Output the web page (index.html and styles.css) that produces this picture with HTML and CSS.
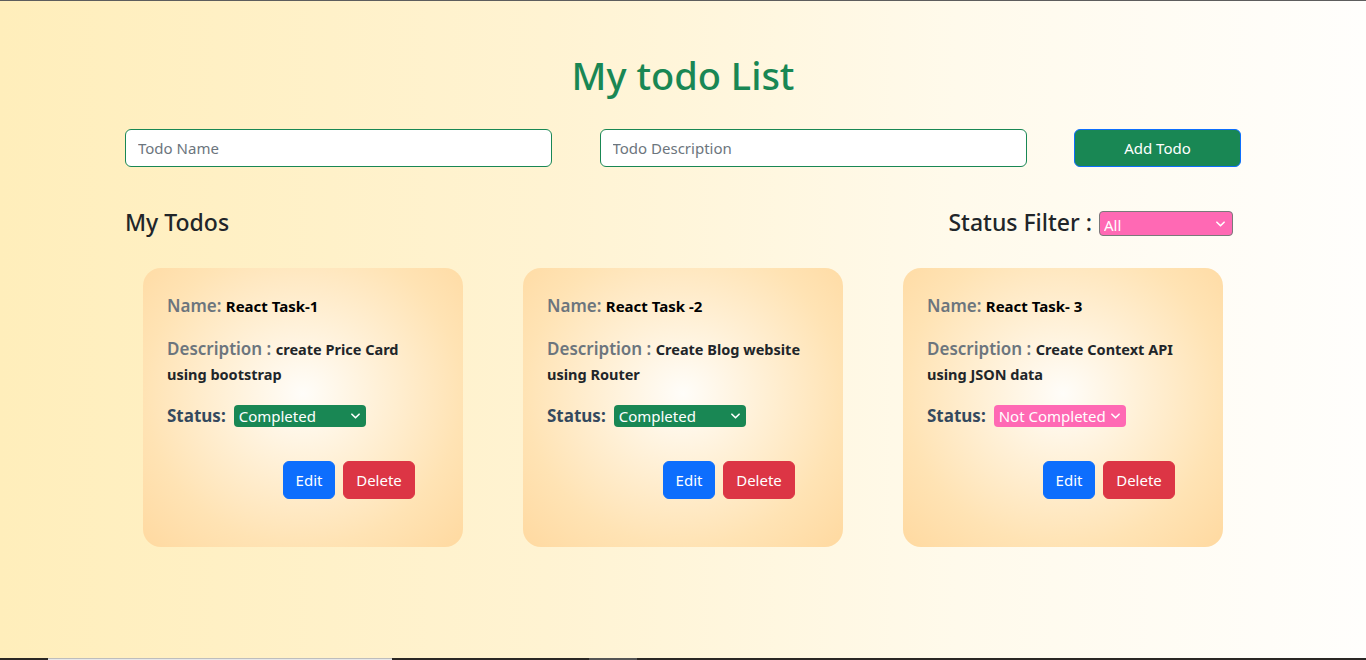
FILE: index.html
```html
<!DOCTYPE html>
<html lang="en">
<head>
<meta charset="utf-8">
<title>My todo List</title>
<link rel="stylesheet" href="styles.css">
</head>
<body>
<div class="page">
  <div class="container">
    <h1 class="title">My todo List</h1>
    <div class="form-row">
      <input class="field" type="text" placeholder="Todo Name">
      <input class="field" type="text" placeholder="Todo Description">
      <button class="btn btn-add">Add Todo</button>
    </div>
    <div class="list-head">
      <h2 class="list-title">My Todos</h2>
      <div class="filter">
        <span class="filter-label">Status Filter :</span>
        <div class="select-wrap select-filter">
          <select class="select"><option>All</option></select>
          <svg class="chev" viewBox="0 0 10 6" width="9" height="6"><path d="M1 1l4 4 4-4" fill="none" stroke="#fff" stroke-width="1.8" stroke-linecap="round" stroke-linejoin="round"/></svg>
        </div>
      </div>
    </div>
    <div class="cards">
      <div class="card">
        <p class="line-name"><span class="lbl">Name:</span> <span class="val-name">React Task-1</span></p>
        <p class="line-desc"><span class="lbl">Description :</span> <span class="val-desc">create Price Card using bootstrap</span></p>
        <div class="status-row">
          <span class="status-lbl">Status:</span>
          <div class="select-wrap select-status done">
            <select class="select"><option>Completed</option></select>
            <svg class="chev" viewBox="0 0 10 6" width="9" height="6"><path d="M1 1l4 4 4-4" fill="none" stroke="#fff" stroke-width="1.8" stroke-linecap="round" stroke-linejoin="round"/></svg>
          </div>
        </div>
        <div class="actions">
          <button class="btn btn-edit">Edit</button>
          <button class="btn btn-del">Delete</button>
        </div>
      </div>
      <div class="card">
        <p class="line-name"><span class="lbl">Name:</span> <span class="val-name">React Task -2</span></p>
        <p class="line-desc"><span class="lbl">Description :</span> <span class="val-desc">Create Blog website using Router</span></p>
        <div class="status-row">
          <span class="status-lbl">Status:</span>
          <div class="select-wrap select-status done">
            <select class="select"><option>Completed</option></select>
            <svg class="chev" viewBox="0 0 10 6" width="9" height="6"><path d="M1 1l4 4 4-4" fill="none" stroke="#fff" stroke-width="1.8" stroke-linecap="round" stroke-linejoin="round"/></svg>
          </div>
        </div>
        <div class="actions">
          <button class="btn btn-edit">Edit</button>
          <button class="btn btn-del">Delete</button>
        </div>
      </div>
      <div class="card">
        <p class="line-name"><span class="lbl">Name:</span> <span class="val-name">React Task- 3</span></p>
        <p class="line-desc"><span class="lbl">Description :</span> <span class="val-desc">Create Context API using JSON data</span></p>
        <div class="status-row">
          <span class="status-lbl">Status:</span>
          <div class="select-wrap select-status notdone">
            <select class="select"><option>Not Completed</option></select>
            <svg class="chev" viewBox="0 0 10 6" width="9" height="6"><path d="M1 1l4 4 4-4" fill="none" stroke="#fff" stroke-width="1.8" stroke-linecap="round" stroke-linejoin="round"/></svg>
          </div>
        </div>
        <div class="actions">
          <button class="btn btn-edit">Edit</button>
          <button class="btn btn-del">Delete</button>
        </div>
      </div>
    </div>
  </div>
  <div class="bottom-bar">
    <span class="seg-a"></span><span class="seg-light"></span><span class="seg-b"></span><span class="seg-gray"></span><span class="seg-c"></span>
  </div>
</div>
</body>
</html>
```

FILE: styles.css
```css
* { box-sizing: border-box; }
html, body { margin: 0; padding: 0; }
body {
  font-family: "Noto Sans", "Open Sans", sans-serif;
  color: #212529;
  height: 660px;
  overflow: hidden;
}
.page {
  height: 660px;
  border-top: 1px solid #5d5d5d;
  background: linear-gradient(to right, #ffeebb 0%, #fff3d2 40%, #fffaeb 70%, #fffefc 100%);
  display: flex;
  flex-direction: column;
}
.container {
  width: 1116px;
  margin: 0 auto;
  flex: 1;
}
.title {
  margin: 50px 0 0;
  height: 48px;
  line-height: 48px;
  text-align: center;
  font-size: 38px;
  font-weight: 500;
  color: #198754;
}
.form-row {
  margin-top: 30px;
  display: flex;
  justify-content: space-between;
}
.field {
  width: 427px;
  height: 38px;
  border: 1px solid #198754;
  border-radius: 6px;
  background: #fff;
  padding: 0 12px;
  font-family: inherit;
  font-size: 15px;
  color: #212529;
}
.field::placeholder { color: #6c757d; }
.btn {
  font-family: inherit;
  font-size: 15px;
  color: #fff;
  border-radius: 6px;
  cursor: pointer;
}
.btn-add {
  width: 167px;
  height: 38px;
  background: #198754;
  border: 1px solid #0d6efd;
}
.list-head {
  margin-top: 41px;
  display: flex;
  justify-content: space-between;
  align-items: center;
  height: 29px;
}
.list-title {
  margin: 0;
  font-size: 23px;
  font-weight: 500;
  line-height: 29px;
}
.filter {
  display: flex;
  align-items: center;
  gap: 7px;
  margin-right: 8px;
}
.filter-label {
  font-size: 23px;
  font-weight: 500;
  line-height: 29px;
}
.select-wrap {
  position: relative;
  display: inline-block;
}
.select {
  -webkit-appearance: none;
  appearance: none;
  font-family: inherit;
  color: #fff;
  margin: 0;
  display: block;
}
.chev {
  position: absolute;
  top: 50%;
  right: 6px;
  margin-top: -3px;
  pointer-events: none;
}
.select-filter .select {
  width: 134px;
  height: 25px;
  background: #ff69b4;
  border: 1px solid #7a7a7a;
  border-radius: 4px;
  font-size: 15px;
  padding: 2px 0 0 4px;
}
.select-filter .chev { right: 8px; }
.select-filter { margin-top: 2px; }
.cards {
  margin-top: 31px;
  display: flex;
  justify-content: center;
  gap: 60px;
}
.card {
  width: 320px;
  height: 279px;
  border-radius: 18px;
  padding: 24px 24px 0;
  background: radial-gradient(ellipse at 50% 45%, #fffdf9 0%, #fff0d6 35%, #ffe3b4 70%, #ffd9a0 100%);
}
.card p { margin: 0; font-size: 17px; }
.lbl {
  font-size: 17px;
  font-weight: 600;
  color: #6c757d;
}
.line-name {
  line-height: 27px;
}
.val-name {
  font-size: 15px;
  font-weight: 700;
  color: #000;
  line-height: 1;
}
.card p.line-desc {
  margin-top: 17px;
  line-height: 25px;
}
.val-desc {
  font-size: 14.5px;
  font-weight: 700;
  color: #212529;
  line-height: 1;
}
.status-row {
  margin-top: 17px;
  display: flex;
  align-items: center;
  gap: 8px;
  height: 25px;
}
.status-lbl {
  font-size: 17px;
  font-weight: 700;
  color: #34495e;
}
.select-status .select {
  width: 132px;
  height: 22px;
  border: none;
  border-radius: 4px;
  font-size: 15px;
  padding: 0 0 0 5px;
}
.select-status.done .select { background: #198754; }
.select-status.notdone .select { background: #ff69b4; }
.select-status .chev { right: 6px; }
.actions {
  margin-top: 33px;
  display: flex;
  justify-content: flex-end;
  gap: 8px;
  padding-right: 24px;
}
.btn-edit {
  width: 52px;
  height: 38px;
  background: #0d6efd;
  border: 1px solid #0d6efd;
}
.btn-del {
  width: 72px;
  height: 38px;
  background: #dc3545;
  border: 1px solid #dc3545;
}
.bottom-bar {
  height: 2px;
  display: flex;
  background: #2a2724;
}
.bottom-bar span { display: block; height: 2px; }
.seg-a { width: 48px; }
.seg-light { width: 344px; background: #e8e8e8; border-top: 1px solid #bdbdbd; }
.seg-b { width: 197px; }
.seg-gray { width: 48px; background: #555; }
.seg-c { flex: 1; }
```
